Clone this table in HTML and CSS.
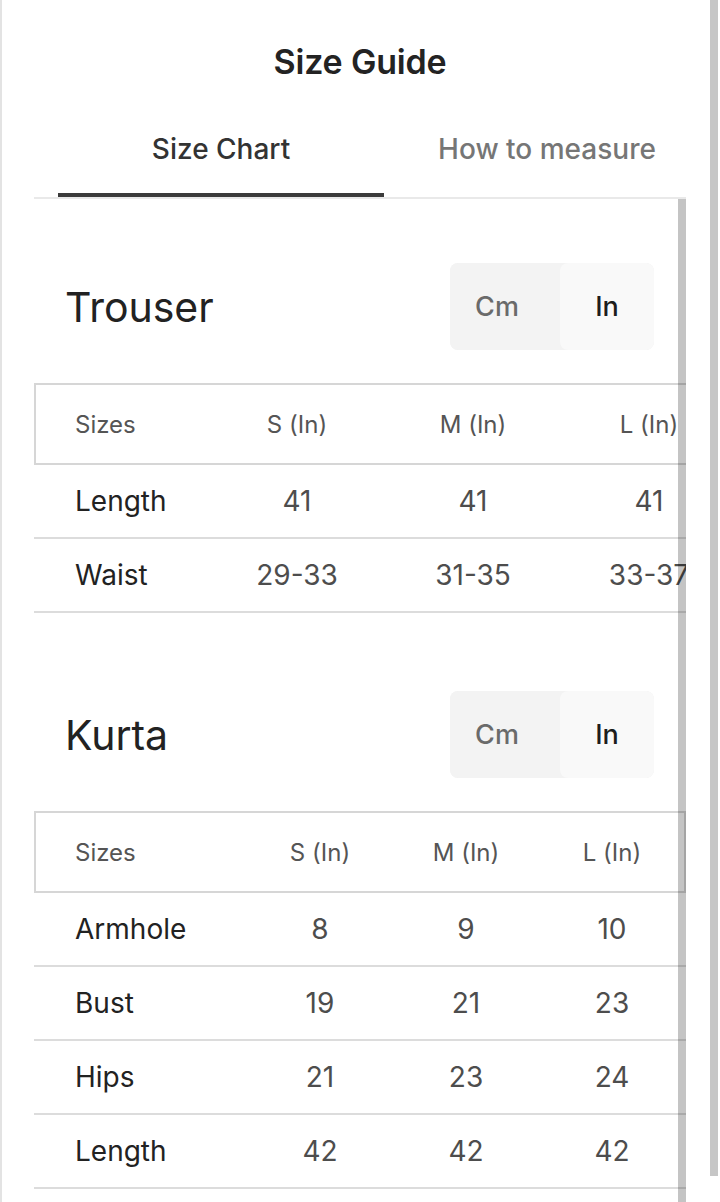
FILE: index.html
```html
<!DOCTYPE html>
<html lang="en">
<head>
<meta charset="utf-8">
<title>Size Guide</title>
<link rel="stylesheet" href="styles.css">
</head>
<body>
<div class="modal">
  <h1 class="title">Size Guide</h1>
  <div class="tabs">
    <div class="tab active">Size Chart</div>
    <div class="tab">How to measure</div>
  </div>
  <div class="scroll">
    <div class="scroll-content">
      <section class="section">
        <div class="section-head">
          <h2 class="section-title">Trouser</h2>
          <div class="toggle">
            <div class="seg seg-cm">Cm</div>
            <div class="seg seg-in">In</div>
          </div>
        </div>
        <div class="chart chart-trouser">
          <div class="row head">
            <div class="cell label">Sizes</div>
            <div class="cell">S (In)</div>
            <div class="cell">M (In)</div>
            <div class="cell">L (In)</div>
          </div>
          <div class="row">
            <div class="cell label">Length</div>
            <div class="cell">41</div>
            <div class="cell">41</div>
            <div class="cell">41</div>
          </div>
          <div class="row">
            <div class="cell label">Waist</div>
            <div class="cell">29-33</div>
            <div class="cell">31-35</div>
            <div class="cell">33-37</div>
          </div>
        </div>
      </section>
      <section class="section">
        <div class="section-head">
          <h2 class="section-title">Kurta</h2>
          <div class="toggle">
            <div class="seg seg-cm">Cm</div>
            <div class="seg seg-in">In</div>
          </div>
        </div>
        <div class="chart chart-kurta">
          <div class="row head">
            <div class="cell label">Sizes</div>
            <div class="cell">S (In)</div>
            <div class="cell">M (In)</div>
            <div class="cell">L (In)</div>
          </div>
          <div class="row">
            <div class="cell label">Armhole</div>
            <div class="cell">8</div>
            <div class="cell">9</div>
            <div class="cell">10</div>
          </div>
          <div class="row">
            <div class="cell label">Bust</div>
            <div class="cell">19</div>
            <div class="cell">21</div>
            <div class="cell">23</div>
          </div>
          <div class="row">
            <div class="cell label">Hips</div>
            <div class="cell">21</div>
            <div class="cell">23</div>
            <div class="cell">24</div>
          </div>
          <div class="row">
            <div class="cell label">Length</div>
            <div class="cell">42</div>
            <div class="cell">42</div>
            <div class="cell">42</div>
          </div>
        </div>
      </section>
    </div>
    <div class="scrollbar"></div>
  </div>
  <div class="page-scrollbar"></div>
</div>
</body>
</html>
```

FILE: styles.css
```css
html, body {
  margin: 0;
  padding: 0;
  height: 1202px;
  overflow: hidden;
  background: #ffffff;
}

body {
  font-family: Inter, "Noto Sans", "Liberation Sans", sans-serif;
  color: #222222;
}

.modal {
  position: relative;
  box-sizing: border-box;
  width: 720px;
  height: 1202px;
  border-left: 2px solid #e3e3e3;
  padding-left: 32px;
  overflow: hidden;
}

.title {
  margin: 0 0 0 -34px;
  padding-top: 40px;
  height: 44px;
  line-height: 44px;
  text-align: center;
  font-size: 34px;
  font-weight: 600;
  color: #232323;
  letter-spacing: -0.2px;
}

.tabs {
  display: flex;
  width: 652px;
  box-sizing: border-box;
  padding-left: 24px;
  margin-top: 47px;
  border-bottom: 2px solid #e9e9e9;
}

.tab {
  flex: 0 0 326px;
  text-align: center;
  font-size: 28px;
  font-weight: 500;
  line-height: 36px;
  padding-bottom: 30px;
  color: #767676;
}

.tab.active {
  color: #333333;
  border-bottom: 4px solid #3b3b3b;
  padding-bottom: 26px;
}

.scroll {
  position: relative;
  width: 652px;
  height: 1003px;
  overflow: hidden;
}

.scroll-content {
  padding-top: 64px;
  display: flex;
  flex-direction: column;
  gap: 78px;
}

.scrollbar {
  position: absolute;
  top: 0;
  right: 0;
  bottom: 0;
  width: 8px;
  background: rgba(0, 0, 0, 0.23);
}

.page-scrollbar {
  position: absolute;
  top: 0;
  left: 708px;
  width: 8px;
  height: 1176px;
  background: #c6c6c6;
}

.section-head {
  display: flex;
  align-items: center;
  justify-content: space-between;
  padding: 0 32px 0 31px;
  height: 87px;
}

.section-title {
  margin: 0;
  font-size: 41px;
  font-weight: 400;
  color: #222222;
}

.toggle {
  display: flex;
  height: 87px;
  border-radius: 8px;
  overflow: hidden;
  background: #f3f3f3;
}

.seg {
  display: flex;
  align-items: center;
  justify-content: center;
  width: 94px;
  font-size: 27px;
  font-weight: 500;
}

.seg-cm {
  padding-right: 16px;
  color: #6a6a6a;
  background: #f3f3f3;
}

.seg-in {
  color: #1d1d1d;
  background: #f9f9f9;
  border-radius: 8px;
}

.chart {
  margin-top: 33px;
}

.row {
  display: grid;
  height: 74px;
  box-sizing: border-box;
  border-bottom: 2px solid #dcdcdc;
  align-items: center;
}

.chart-trouser .row {
  width: 704px;
  grid-template-columns: 175px 176px 176px 176px;
}

.chart-kurta .row {
  width: 652px;
  grid-template-columns: 213px 146px 146px 146px;
}

.row.head {
  height: 82px;
  border-bottom: none;
  box-shadow: inset 0 0 0 2px #d6d6d6;
}

.cell {
  text-align: center;
  font-size: 28px;
  color: #4d4d4d;
}

.cell.label {
  text-align: left;
  padding-left: 41px;
  color: #222222;
}

.row.head .cell {
  font-size: 24px;
  color: #555555;
}
```
